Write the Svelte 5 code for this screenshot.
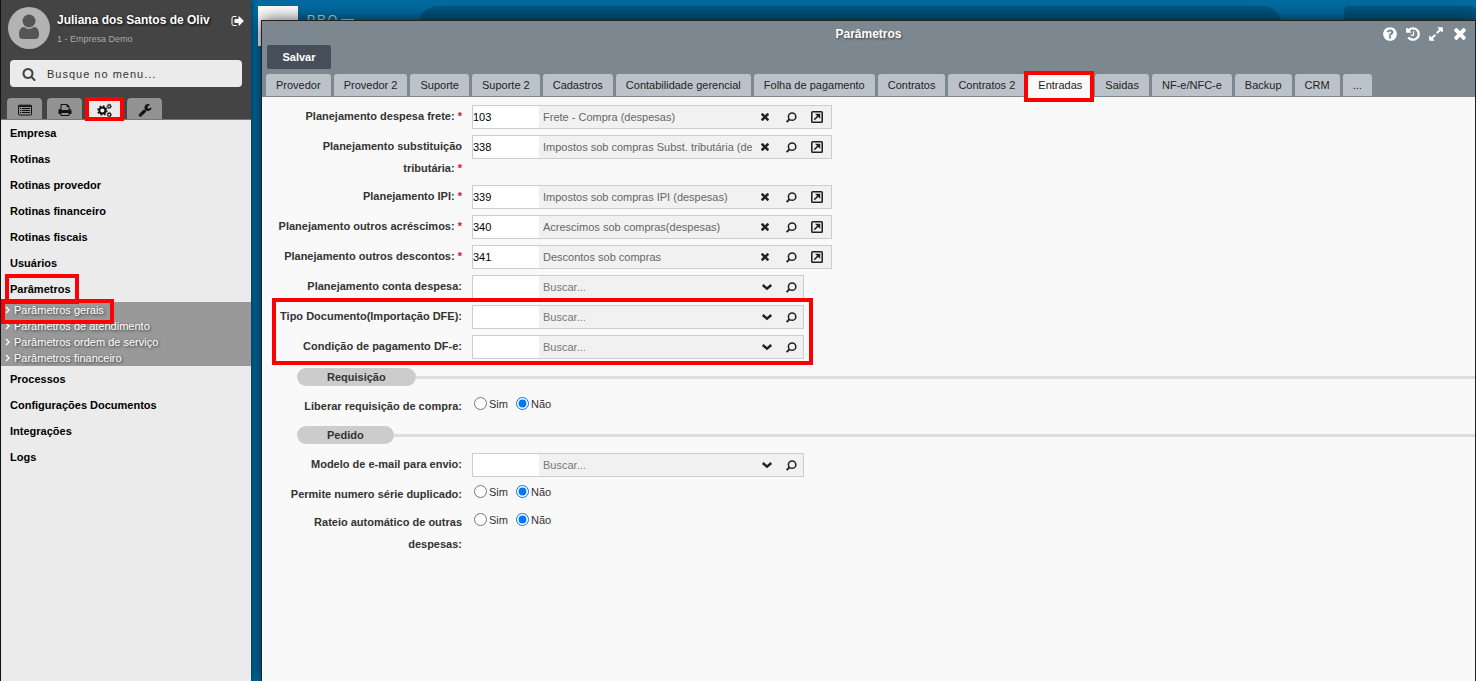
<script>
	import { onMount } from 'svelte';

	const toolTabs = [
		{ icon: 'list', label: 'Cadastros' },
		{ icon: 'print', label: 'Relatórios' },
		{ icon: 'cogs', label: 'Sistema' },
		{ icon: 'wrench', label: 'Ferramentas' }
	];

	const menu = [
		{ label: 'Empresa' },
		{ label: 'Rotinas' },
		{ label: 'Rotinas provedor' },
		{ label: 'Rotinas financeiro' },
		{ label: 'Rotinas fiscais' },
		{ label: 'Usuários' },
		{
			label: 'Parâmetros',
			children: [
				'Parâmetros gerais',
				'Parâmetros de atendimento',
				'Parâmetros ordem de serviço',
				'Parâmetros financeiro'
			]
		},
		{ label: 'Processos' },
		{ label: 'Configurações Documentos' },
		{ label: 'Integrações' },
		{ label: 'Logs' }
	];

	const tabs = [
		'Provedor',
		'Provedor 2',
		'Suporte',
		'Suporte 2',
		'Cadastros',
		'Contabilidade gerencial',
		'Folha de pagamento',
		'Contratos',
		'Contratos 2',
		'Entradas',
		'Saidas',
		'NF-e/NFC-e',
		'Backup',
		'CRM',
		'...'
	];

	const plans = [
		{ id: 'frete', label: 'Planejamento despesa frete:', code: '103', text: 'Frete - Compra (despesas)' },
		{
			id: 'subst',
			label: 'Planejamento substituição tributária:',
			code: '338',
			text: 'Impostos sob compras Subst. tributária (despesas)'
		},
		{ id: 'ipi', label: 'Planejamento IPI:', code: '339', text: 'Impostos sob compras IPI (despesas)' },
		{
			id: 'acrescimos',
			label: 'Planejamento outros acréscimos:',
			code: '340',
			text: 'Acrescimos sob compras(despesas)'
		},
		{ id: 'descontos', label: 'Planejamento outros descontos:', code: '341', text: 'Descontos sob compras' }
	];

	const dfe = [
		{ id: 'tipo', label: 'Tipo Documento(Importação DFE):' },
		{ id: 'condicao', label: 'Condição de pagamento DF-e:' }
	];

	let activeTool = 'cogs';
	let activeTab = 'Entradas';
	let answers = { liberar: 'nao', serie: 'nao', rateio: 'nao' };

	onMount(() => {
		const first = document.getElementById('frete');
		first.focus();
		first.setSelectionRange(3, 3);
	});
</script>

<!-- Icons are drawn on the 1792 unit grid -->
{#snippet icon(name, size)}
	<svg class="icon" width={size} height={size} viewBox="0 0 1792 1792" aria-hidden="true">
		{#if name == 'search'}
			<path d="M1216 832q0-185-131.500-316.500t-316.500-131.500-316.500 131.500-131.500 316.500 131.500 316.500 316.500 131.500 316.500-131.500 131.500-316.500zm512 832q0 52-38 90t-90 38q-54 0-90-38l-343-342q-179 124-399 124-143 0-273.500-55.500t-225-150-150-225-55.500-273.500 55.500-273.500 150-225 225-150 273.500-55.500 273.500 55.500 225 150 150 225 55.500 273.500q0 220-124 399l343 343q37 37 37 90z" />
		{:else if name == 'logout'}
			<path d="M704 1440q0 4 1 20t.5 26.500-3 23.500-10 19.500-20.500 6.500h-320q-119 0-203.500-84.500t-84.500-203.500v-704q0-119 84.500-203.500t203.500-84.500h320q13 0 22.500 9.500t9.500 22.500q0 4 1 20t.5 26.500-3 23.500-10 19.500-20.500 6.500h-320q-66 0-113 47t-47 113v704q0 66 47 113t113 47h312l11.500 1 11.500 3 8 5.500 7 9 2 13.500zm928-544q0 26-19 45l-544 544q-19 19-45 19t-45-19-19-45v-288h-448q-26 0-45-19t-19-45v-384q0-26 19-45t45-19h448v-288q0-26 19-45t45-19 45 19l544 544q19 19 19 45z" />
		{:else if name == 'list'}
			<g fill="none" stroke="currentColor">
				<rect x="64" y="280" width="1664" height="1260" rx="120" stroke-width="128" />
				<path d="M64 400H1728" stroke-width="200" />
				<path d="M256 704h140M500 704h1040M256 960h140M500 960h1040M256 1216h140M500 1216h1040" stroke-width="128" />
			</g>
		{:else if name == 'print'}
			<path fill-rule="evenodd" d="M448 1536h896v-256h-896v256zm0-640h896v-384h-160q-40 0-68-28t-28-68v-160h-640v640zm1152 64q0-26-19-45t-45-19-45 19-19 45 19 45 45 19 45-19 19-45zm128 0v416q0 13-9.500 22.500t-22.500 9.500h-224v160q0 40-28 68t-68 28h-960q-40 0-68-28t-28-68v-160h-224q-13 0-22.500-9.500t-9.500-22.500v-416q0-79 56.500-135.500t135.500-56.500h64v-544q0-40 28-68t68-28h672q40 0 88 20t76 48l152 152q28 28 48 76t20 88v256h64q79 0 135.500 56.500t56.500 135.500z" />
		{:else if name == 'cogs'}
			<g fill="none" stroke="currentColor">
				<circle cx="640" cy="896" r="370" stroke-width="240" />
				<circle cx="640" cy="896" r="540" stroke-width="170" stroke-dasharray="212 212" />
				<circle cx="1460" cy="400" r="180" stroke-width="130" />
				<circle cx="1460" cy="400" r="270" stroke-width="90" stroke-dasharray="106 106" />
				<circle cx="1460" cy="1392" r="180" stroke-width="130" />
				<circle cx="1460" cy="1392" r="270" stroke-width="90" stroke-dasharray="106 106" />
			</g>
		{:else if name == 'wrench'}
			<path fill-rule="evenodd" d="M448 1472q0-26-19-45t-45-19-45 19-19 45 19 45 45 19 45-19 19-45zm644-420l-682 682q-37 37-90 37-52 0-91-37l-106-108q-38-36-38-90 0-53 38-91l681-681q39 98 114.500 173.500t173.500 114.500zm634-435q0 39-23 106-47 134-164.500 217.500t-258.500 83.500q-185 0-316.500-131.500t-131.500-316.500 131.500-316.500 316.500-131.500q58 0 121.500 16.500t107.500 46.500q16 11 16 28t-16 28l-293 169v224l193 107q5-3 79-48.500t135.500-81 70.500-35.500q15 0 23.500 10t8.500 25z" />
		{:else if name == 'help'}
			<path fill-rule="evenodd" d="M1024 1376v-192q0-14-9-23t-23-9h-192q-14 0-23 9t-9 23v192q0 14 9 23t23 9h192q14 0 23-9t9-23zm256-672q0-88-55.500-163t-138.500-116-170-41q-243 0-371 213-15 24 8 42l132 100q7 6 19 6 16 0 25-12 53-68 86-92 34-24 86-24 48 0 85.500 26t37.500 59q0 38-20 61t-68 45q-63 28-115.500 86.500t-52.500 125.500v36q0 14 9 23t23 9h192q14 0 23-9t9-23q0-19 21.500-49.500t54.500-49.500q32-18 49-28.500t46-35 44.500-48 28-60.500 12.500-81zm384 192q0 209-103 385.500t-279.500 279.500-385.500 103-385.500-103-279.500-279.500-103-385.500 103-385.500 279.500-279.500 385.500-103 385.500 103 279.500 279.500 103 385.500z" />
		{:else if name == 'history'}
			<path d="M1664 896q0 156-61 298t-164 245-245 164-298 61q-172 0-327-72.500t-264-204.500q-7-10-6.500-22.500t8.500-20.500l137-138q10-9 25-9 16 2 23 12 73 95 179 147t225 52q104 0 198.500-40.500t163.500-109.500 109.500-163.500 40.500-198.500-40.500-198.500-109.500-163.500-163.500-109.500-198.500-40.500q-98 0-188 35.500t-160 101.500l137 138q31 30 14 69-17 40-59 40h-448q-26 0-45-19t-19-45v-448q0-42 40-59 39-17 69 14l130 129q107-101 244.500-156.500t284.500-55.500q156 0 298 61t245 164 164 245 61 298zm-640-288v448q0 14-9 23t-23 9h-320q-14 0-23-9t-9-23v-64q0-14 9-23t23-9h224v-352q0-14 9-23t23-9h64q14 0 23 9t9 23z" />
		{:else if name == 'expand'}
			<path d="M1664 128v512q0 26-19 45t-45 19-45-19l-144-144-332 332q-10 10-23 10t-23-10l-114-114q-10-10-10-23t10-23l332-332-144-144q-19-19-19-45t19-45 45-19h448q26 0 45 19t19 45zM883 1056q0 13-10 23l-332 332 144 144q19 19 19 45t-19 45-45 19h-448q-26 0-45-19t-19-45v-448q0-26 19-45t45-19 45 19l144 144 332-332q10-10 23-10t23 10l114 114q10 10 10 23z" />
		{:else if name == 'times'}
			<path d="M1618 1322q0 40-28 68l-136 136q-28 28-68 28t-68-28l-294-294-294 294q-28 28-68 28t-68-28l-136-136q-28-28-28-68t28-68l294-294-294-294q-28-28-28-68t28-68l136-136q28-28 68-28t68 28l294 294 294-294q28-28 68-28t68 28l136 136q28 28 28 68t-28 68l-294 294 294 294q28 28 28 68z" transform="translate(-128 -64)" />
		{:else if name == 'lens'}
			<g fill="none" stroke="currentColor" stroke-width="210">
				<circle cx="980" cy="780" r="510" />
				<path d="M620 1140L220 1540" stroke-width="260" />
			</g>
		{:else if name == 'chevron'}
			<path d="M260 600L896 1160L1532 600" fill="none" stroke="currentColor" stroke-width="360" />
		{:else if name == 'external'}
			<g fill="none" stroke="currentColor" stroke-width="200">
				<rect x="228" y="228" width="1336" height="1336" rx="100" />
				<path d="M540 1250L1100 690" />
				<path d="M640 480H1310V1150L1090 930L860 700Z" fill="currentColor" stroke="none" />
			</g>
		{/if}
	</svg>
{/snippet}

{#snippet lookup(id, label)}
	<div class="row">
		<label for={id}>{label}</label>
		<div class="field short">
			<input class="code" {id} type="text" />
			<input class="desc" type="text" placeholder="Buscar..." aria-label="{label} busca" />
			<button type="button" aria-label="Abrir lista">{@render icon('chevron', 12)}</button>
			<button type="button" aria-label="Pesquisar">{@render icon('lens', 13)}</button>
		</div>
	</div>
{/snippet}

{#snippet yesNo(name, label)}
	<div class="row choice" role="radiogroup" aria-labelledby="{name}-label">
		<span class="label" id="{name}-label">{label}</span>
		<div class="options">
			<label><input type="radio" {name} value="sim" bind:group={answers[name]} />Sim</label>
			<label><input type="radio" {name} value="nao" bind:group={answers[name]} />Não</label>
		</div>
	</div>
{/snippet}

<div class="desktop">
	<aside>
		<header class="profile">
			<div class="user">
				<svg class="avatar" width="42" height="42" viewBox="0 0 42 42" aria-hidden="true">
					<circle cx="21" cy="21" r="21" fill="#b3b3b3" />
					<circle cx="21" cy="14" r="6.500" />
					<path d="M11 28q0-8 5-8q5 4 10 0q5 0 5 8q0 4-4 4h-12q-4 0-4-4z" />
				</svg>
				<div class="who">
					<strong>Juliana dos Santos de Oliv</strong>
					<small>1 - Empresa Demo</small>
				</div>
				<button class="logout" type="button" aria-label="Sair">{@render icon('logout', 14)}</button>
			</div>
			<div class="search">
				{@render icon('search', 14)}
				<input type="text" placeholder="Busque no menu..." aria-label="Busque no menu" />
			</div>
			<div class="tools">
				{#each toolTabs as tool}
					<button
						type="button"
						aria-label={tool.label}
						class:active={activeTool == tool.icon}
						class:marked={tool.icon == 'cogs'}
						on:click={() => (activeTool = tool.icon)}
					>
						{@render icon(tool.icon, tool.icon == 'cogs' ? 15 : 14)}
					</button>
				{/each}
			</div>
		</header>
		<nav>
			{#each menu as item}
				<a class="item" href="#menu"><span class:marked={item.children}>{item.label}</span></a>
				{#if item.children}
					<div class="submenu">
						{#each item.children as child, i}
							<a href="#menu" class:marked={i == 0}>
								<svg width="5" height="8" viewBox="0 0 5 8" aria-hidden="true">
									<path d="M1 1L4 4L1 7" fill="none" stroke="#fff" stroke-width="1.300" />
								</svg>
								{child}
							</a>
						{/each}
					</div>
				{/if}
			{/each}
		</nav>
	</aside>

	<div class="backdrop">
		<div class="logo"></div>
		<span class="brand">PRO<i></i></span>
		<div class="bar"></div>
		<div class="panel"></div>
	</div>

	<main class="window">
		<header class="titlebar">
			<div class="title">
				<h1>Parâmetros</h1>
				<div class="controls">
					<button type="button" aria-label="Ajuda">{@render icon('help', 16)}</button>
					<button type="button" aria-label="Histórico">{@render icon('history', 16)}</button>
					<button type="button" aria-label="Expandir">{@render icon('expand', 16)}</button>
					<button type="button" aria-label="Fechar">{@render icon('times', 18)}</button>
				</div>
			</div>
			<button class="save" type="button">Salvar</button>
			<div class="tabs" role="tablist">
				{#each tabs as tab}
					<button
						type="button"
						role="tab"
						aria-selected={activeTab == tab}
						class:active={activeTab == tab}
						class:marked={tab == 'Entradas'}
						on:click={() => (activeTab = tab)}>{tab}</button
					>
				{/each}
			</div>
		</header>

		<form on:submit|preventDefault>
			{#each plans as plan}
				<div class="row">
					<label for={plan.id}>{plan.label} <b>*</b></label>
					<div class="field">
						<input class="code" id={plan.id} type="text" value={plan.code} />
						<input class="desc" type="text" value={plan.text} aria-label={plan.label} readonly />
						<button type="button" aria-label="Limpar">{@render icon('times', 12)}</button>
						<button type="button" aria-label="Pesquisar">{@render icon('lens', 13)}</button>
						<button type="button" aria-label="Abrir cadastro">{@render icon('external', 14)}</button>
					</div>
				</div>
			{/each}
			{@render lookup('conta', 'Planejamento conta despesa:')}
			<div class="group marked">
				{#each dfe as item}
					{@render lookup(item.id, item.label)}
				{/each}
			</div>

			<h2><span>Requisição</span></h2>
			{@render yesNo('liberar', 'Liberar requisição de compra:')}

			<h2><span>Pedido</span></h2>
			{@render lookup('modelo', 'Modelo de e-mail para envio:')}
			{@render yesNo('serie', 'Permite numero série duplicado:')}
			{@render yesNo('rateio', 'Rateio automático de outras despesas:')}
		</form>
	</main>
</div>

<style>
	:global(body) {
		margin: 0;
		background: #006ba1;
		color: #333;
		font-family: 'Liberation Sans', Arial, sans-serif;
		font-size: 11px;
	}

	button,
	input {
		font: inherit;
		color: inherit;
		box-sizing: border-box;
		margin: 0;
		padding: 0;
		border: 0;
		outline: 0;
		background: none;
	}

	button {
		cursor: pointer;
	}

	a {
		color: inherit;
		text-decoration: none;
	}

	.icon {
		display: block;
		fill: currentColor;
	}

	.desktop {
		display: flex;
		position: relative;
		min-height: 100vh;
		overflow: hidden;
	}

	/* Red highlight frames */
	.marked {
		position: relative;
	}

	.marked::after {
		content: '';
		position: absolute;
		z-index: 3;
		border: 4px solid #f00;
		pointer-events: none;
	}

	/* Sidebar */
	aside {
		box-sizing: border-box;
		width: 251px;
		flex-shrink: 0;
		z-index: 2;
		border-left: 1px solid #111;
		background: #ebebeb;
		box-shadow: 0 0 5px #002a40;
	}

	.profile {
		box-sizing: border-box;
		height: 120px;
		border-bottom: 1px solid #777;
		background: #444;
	}

	.user {
		display: flex;
		gap: 7px;
		padding: 7px 6px 0 7px;
	}

	.avatar {
		fill: #555;
	}

	.who {
		flex: 1;
		padding-top: 5px;
		white-space: nowrap;
	}

	.who strong {
		display: block;
		color: #fff;
		font-size: 12px;
		line-height: 16px;
		text-shadow: 1px 1px 3px #000;
	}

	.who small {
		display: block;
		color: #aaa;
		font-size: 9px;
		line-height: 12px;
		padding-top: 5px;
	}

	.logout {
		align-self: flex-start;
		padding-top: 7px;
		color: #fff;
	}

	.search {
		display: flex;
		align-items: center;
		gap: 11px;
		height: 27px;
		margin: 11px 9px;
		padding-left: 12px;
		border-radius: 4px;
		background: #ebebeb;
		color: #444;
	}

	.search input {
		flex: 1;
		min-width: 0;
		letter-spacing: 1px;
	}

	.search input::placeholder {
		color: #333;
		opacity: 1;
	}

	.tools {
		display: flex;
		gap: 5px;
		padding-left: 6px;
	}

	.tools button {
		display: flex;
		align-items: center;
		justify-content: center;
		width: 35px;
		height: 21px;
		padding-top: 3px;
		border-radius: 4px 4px 0 0;
		background: #929292;
		color: #111;
	}

	.tools .active {
		background: #ebebeb;
	}

	.tools .marked::after {
		inset: -1px -2px -2px;
	}

	.item {
		display: block;
		padding-left: 9px;
		color: #000;
		font-weight: bold;
		line-height: 26px;
	}

	.item .marked::after {
		inset: -9px -8px -9px -5px;
	}

	.submenu {
		background: #999;
		color: #fff;
		text-shadow: 1px 1px 3px #333;
	}

	.submenu a {
		display: flex;
		align-items: center;
		gap: 4px;
		width: fit-content;
		padding-left: 4px;
		line-height: 16px;
	}

	.submenu .marked::after {
		inset: -3px -10px -6px 0;
	}

	/* Page behind the window */
	.backdrop {
		display: flex;
		flex: 1;
		height: 40px;
		padding: 6px 0 0 7px;
	}

	.logo {
		width: 40px;
		height: 40px;
		background: #fff;
	}

	.brand {
		display: flex;
		gap: 2px;
		width: 111px;
		padding: 7px 0 0 9px;
		color: #c5d9e4;
		font-size: 12px;
		letter-spacing: 2px;
	}

	.brand i {
		width: 13px;
		height: 2px;
		margin-top: 6px;
		background: #c5d9e4;
	}

	.bar {
		flex: 1;
		border-radius: 20px 20px 0 0;
		background: #005580;
	}

	.panel {
		width: 132px;
		margin-left: 62px;
		border-radius: 5px 5px 0 0;
		background: #005580;
	}

	.window {
		position: absolute;
		inset: 20px 0 0 261px;
		border: 1px solid #222;
		border-bottom: 0;
		background: #f9f9f9;
		box-shadow: 0 0 16px rgba(0, 0, 0, 0.7);
	}

	.titlebar {
		background: #7d8790;
	}

	.title {
		position: relative;
		padding: 5px 0 3px;
		color: #fff;
	}

	h1 {
		margin: 0;
		font-size: 12px;
		line-height: 16px;
		text-align: center;
		text-shadow: 1px 1px 2px #444;
	}

	.controls {
		display: flex;
		align-items: center;
		gap: 7px;
		position: absolute;
		top: 4px;
		right: 6px;
	}

	.save {
		display: block;
		width: 64px;
		height: 24px;
		margin-left: 5px;
		border-radius: 2px;
		background: #464f59;
		color: #fff;
		font-weight: bold;
	}

	.tabs {
		display: flex;
		gap: 3px;
		padding: 5px 4px 0;
	}

	.tabs button {
		height: 22px;
		margin-bottom: 1px;
		padding: 0 10px;
		border-radius: 3px 3px 0 0;
		background: #bcc2ca;
		color: #222;
		white-space: nowrap;
	}

	.tabs .active {
		height: 23px;
		margin-bottom: 0;
		padding-bottom: 1px;
		background: #f9f9f9;
	}

	.tabs .marked::after {
		inset: -3px -2px -5px -4px;
	}

	/* Form */
	form {
		padding-top: 8px;
	}

	.row {
		display: flex;
		gap: 10px;
		min-height: 24px;
		padding: 0 10px 6px;
	}

	.row > label,
	.label {
		width: 190px;
		flex-shrink: 0;
		font-weight: bold;
		line-height: 22px;
		text-align: right;
	}

	label b {
		color: #f02;
	}

	.field {
		display: flex;
		box-sizing: border-box;
		width: 360px;
		height: 24px;
		padding-right: 1px;
		border: 1px solid #ccc;
		background: #f1f1f1;
	}

	.short {
		width: 332px;
		padding-right: 0;
	}

	.code {
		width: 66px;
		background: #fff;
		color: #000;
	}

	.desc {
		flex: 1;
		min-width: 0;
		margin-left: 4px;
		color: #666;
	}

	.desc::placeholder {
		color: #777;
		opacity: 1;
	}

	.field button {
		display: flex;
		align-items: center;
		justify-content: center;
		width: 26px;
		color: #222;
	}

	.short button {
		width: 24px;
	}

	.group.marked::after {
		inset: -7px auto 0 10px;
		width: 533px;
	}

	.choice {
		min-height: 22px;
	}

	.options {
		display: flex;
		gap: 8px;
		padding-left: 2px;
	}

	.options label {
		display: flex;
		align-items: center;
		gap: 2px;
		height: 18px;
	}

	.options input {
		width: 13px;
		height: 13px;
		margin-bottom: 2px;
	}

	h2 {
		display: flex;
		align-items: center;
		margin: 3px 0 9px 35px;
		font-size: 11px;
		line-height: 18px;
	}

	h2::after {
		content: '';
		flex: 1;
		height: 3px;
		background: #ddd;
	}

	h2 span {
		padding: 0 30px;
		border-radius: 9px;
		background: #ccc;
	}
</style>
